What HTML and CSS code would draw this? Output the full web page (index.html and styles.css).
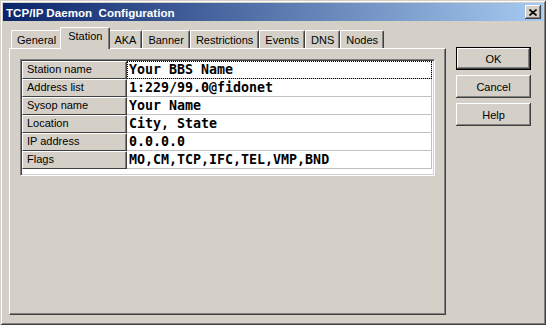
FILE: index.html
```html
<!DOCTYPE html>
<html>
<head>
<meta http-equiv="Content-Type" content="text/html; charset=utf-8"/>
<title>TCP/IP Daemon Configuration</title>
<link rel="stylesheet" href="styles.css">
</head>
<body>
<div class="window">
  <div class="titlebar">
    <span class="title">TCP/IP Daemon&nbsp; Configuration</span>
    <span class="close">
      <svg width="8" height="7" viewBox="0 0 8 7">
        <path d="M0.5 0.5 L7.5 6.5 M7.5 0.5 L0.5 6.5" stroke="#000" stroke-width="1.6" fill="none"/>
      </svg>
    </span>
  </div>

  <div class="client">
    <div class="sheet">
      <div class="tabs">
        <div class="tab">General</div>
        <div class="tab active">Station</div>
        <div class="tab">AKA</div>
        <div class="tab">Banner</div>
        <div class="tab">Restrictions</div>
        <div class="tab">Events</div>
        <div class="tab">DNS</div>
        <div class="tab">Nodes</div>
      </div>
      <div class="panel">
        <div class="grid">
          <div class="row"><div class="label">Station name</div><div class="value focus">Your BBS Name</div></div>
          <div class="row"><div class="label">Address list</div><div class="value">1:229/99.0@fidonet</div></div>
          <div class="row"><div class="label">Sysop name</div><div class="value">Your Name</div></div>
          <div class="row"><div class="label">Location</div><div class="value">City, State</div></div>
          <div class="row"><div class="label">IP address</div><div class="value">0.0.0.0</div></div>
          <div class="row"><div class="label">Flags</div><div class="value">MO,CM,TCP,IFC,TEL,VMP,BND</div></div>
        </div>
      </div>
    </div>

    <div class="buttons">
      <div class="btn default">OK</div>
      <div class="btn">Cancel</div>
      <div class="btn">Help</div>
    </div>
  </div>
</div>
</body>
</html>
```

FILE: styles.css
```css
body {
  margin: 0;
  background-color: #d4d0c8;
  font-family: "Liberation Sans", Arial, sans-serif;
  font-size: 11px;
  color: #000;
}

.window {
  width: 546px;
  height: 325px;
  box-sizing: border-box;
  padding: 3px;
  background-color: #d4d0c8;
  box-shadow: inset 1px 1px #d4d0c8, inset -1px -1px #404040,
              inset 2px 2px #fff, inset -2px -2px #808080;
  display: flex;
  flex-direction: column;
}

/* title bar */
.titlebar {
  height: 18px;
  flex: none;
  background: linear-gradient(to right, #0a246a, #a6caf0);
  display: flex;
  align-items: center;
  justify-content: space-between;
  padding: 0 2px 0 2px;
}

.title {
  color: #fff;
  font-weight: bold;
  font-size: 11.6px;
  padding-left: 1px;
}

.close {
  width: 16px;
  height: 14px;
  box-sizing: border-box;
  background-color: #d4d0c8;
  box-shadow: inset -1px -1px #404040, inset 1px 1px #fff,
              inset -2px -2px #808080;
  display: flex;
  align-items: center;
  justify-content: center;
}

/* client area */
.client {
  flex: 1;
  display: flex;
  gap: 10px;
  padding: 6px 12px 0 6px;
}

.sheet {
  width: 437px;
  display: flex;
  flex-direction: column;
  padding-bottom: 7px;
}

.tabs {
  display: flex;
  align-items: flex-end;
  padding-left: 2px;
  height: 21px;
  position: relative;
  z-index: 1;
}

.tab {
  height: 18px;
  box-sizing: border-box;
  padding: 3px 5px 0 5px;
  border-top: 1px solid #fff;
  border-left: 1px solid #fff;
  border-right: 1px solid #404040;
  box-shadow: inset -1px 0 #808080;
  border-radius: 2px 2px 0 0;
  white-space: nowrap;
}

.tab.active {
  height: 22px;
  margin: 0 -2px -1px -2px;
  padding-top: 2px;
  padding-left: 7px;
  padding-right: 7px;
  background-color: #d4d0c8;
  position: relative;
  z-index: 2;
}

.panel {
  flex: 1;
  border-top: 1px solid #fff;
  border-left: 1px solid #fff;
  border-right: 1px solid #404040;
  border-bottom: 1px solid #404040;
  box-shadow: inset -1px -1px #808080;
  padding: 10px 0 0 10px;
}

/* property grid */
.grid {
  width: 415px;
  height: 117px;
  box-sizing: border-box;
  background-color: #fff;
  border-top: 1px solid #808080;
  border-left: 1px solid #808080;
  border-right: 1px solid #fff;
  border-bottom: 1px solid #fff;
  box-shadow: inset 1px 1px #404040, inset -1px -1px #d4d0c8;
  padding: 1px 0 0 1px;
}

.row {
  display: flex;
  height: 18px;
  width: 410px;
}

.label {
  width: 105px;
  box-sizing: border-box;
  background-color: #d4d0c8;
  border-top: 1px solid #fff;
  border-left: 1px solid #fff;
  border-right: 1px solid #404040;
  border-bottom: 1px solid #404040;
  box-shadow: inset -1px 0 #808080;
  padding: 1px 0 0 4px;
  white-space: nowrap;
}

.value {
  flex: 1;
  box-sizing: border-box;
  border-bottom: 1px solid #c0c0c0;
  border-right: 1px solid #c0c0c0;
  padding-left: 2px;
  font-family: "DejaVu Sans Mono", "Liberation Mono", monospace;
  font-weight: bold;
  font-size: 13.3px;
  line-height: 17px;
  white-space: nowrap;
}

.value.focus {
  outline: 1px dotted #000;
  outline-offset: -1px;
}

/* buttons */
.buttons {
  display: flex;
  flex-direction: column;
  gap: 5px;
  padding-top: 20px;
}

.btn {
  width: 75px;
  height: 23px;
  box-sizing: border-box;
  display: flex;
  align-items: center;
  justify-content: center;
  box-shadow: inset -1px -1px #404040, inset 1px 1px #fff,
              inset -2px -2px #808080, inset 2px 2px #d4d0c8;
}

.btn.default {
  border: 1px solid #000;
}
```
